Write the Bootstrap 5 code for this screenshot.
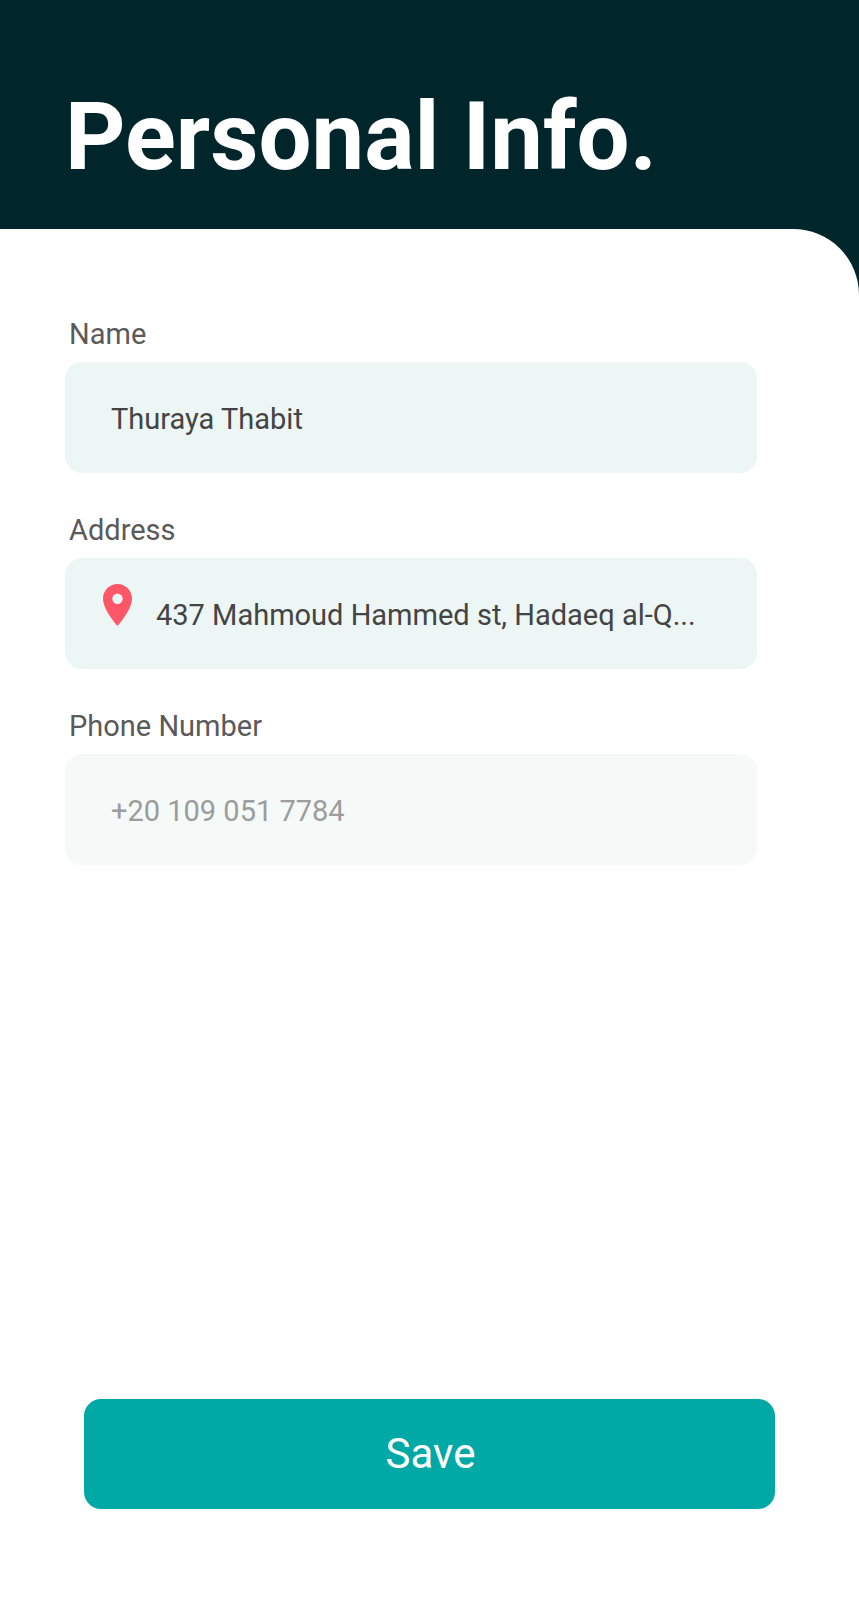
<!DOCTYPE html>
<html lang="en">
<head>
<meta charset="utf-8">
<meta name="viewport" content="width=device-width, initial-scale=1">
<title>Personal Info</title>
<link href="https://cdn.jsdelivr.net/npm/bootstrap@5.3.0/dist/css/bootstrap.min.css" rel="stylesheet">
<style>
  body { background: #00262b; font-family: Roboto, "Liberation Sans", sans-serif; }
  .page-header { padding: 82px 65px 37px; }
  .page-title { font-size: 94px; line-height: 110px; }
  .sheet { padding: 87px 84px 112px 65px; border-top-right-radius: 66px; }
  .fields { gap: 39px; padding-right: 18px; }
  .field-label { font-size: 29px; line-height: 36px; margin: 0 0 10px 4px; color: #5a5a5a; }
  .field-box { border-radius: 17px; background: #ecf6f5; padding: 0 46px; height: 111px; border: 0; }
  .field-box input { font-size: 29px; line-height: 36px; color: #444; padding: 3px 0 0; border-radius: 0; }
  .field-box input:focus { box-shadow: none; background: transparent; }
  .field-box.with-pin { padding: 0 46px 0 38px; }
  .pin { width: 29px; height: 42px; margin: 0 24px 17px 0; }
  .field-box.is-empty { background: #f5f9f8; }
  .field-box input::placeholder { color: #9c9c9c; opacity: 1; }
  .save-btn { --bs-btn-bg: #00a8a6; --bs-btn-border-color: #00a8a6; --bs-btn-color: #fff;
    --bs-btn-hover-bg: #009492; --bs-btn-hover-color: #fff; --bs-btn-active-bg: #008583; --bs-btn-active-color: #fff;
    --bs-btn-border-radius: 17px; --bs-btn-border-width: 0; margin-left: 19px;
    font-size: 42px; line-height: 50px; padding: 30px 28px 30px 30px; }
</style>
</head>
<body class="min-vh-100 d-flex flex-column">
<header class="page-header">
  <h1 class="page-title fw-bold text-white m-0">Personal Info.</h1>
</header>
<main class="flex-grow-1 d-flex">
  <form class="sheet bg-white flex-grow-1 d-flex flex-column">
    <div class="fields d-flex flex-column">
      <div>
        <label class="field-label d-block" for="name">Name</label>
        <div class="field-box d-flex align-items-center">
          <input class="form-control border-0 bg-transparent" id="name" type="text" value="Thuraya Thabit">
        </div>
      </div>
      <div>
        <label class="field-label d-block" for="address">Address</label>
        <div class="field-box with-pin d-flex align-items-center">
          <svg class="pin flex-shrink-0" viewBox="0 0 29 42" aria-hidden="true">
            <path fill="#ff5668" fill-rule="evenodd" d="M14.500 0C6.500 0 0 6.600 0 14.700C0 25.700 14.500 42 14.500 42S29 25.700 29 14.700C29 6.600 22.500 0 14.500 0ZM14.500 20A5.200 5.200 0 1 1 14.500 9.600A5.200 5.200 0 0 1 14.500 20Z"/>
          </svg>
          <input class="form-control border-0 bg-transparent" id="address" type="text" value="437 Mahmoud Hammed st, Hadaeq al-Q...">
        </div>
      </div>
      <div>
        <label class="field-label d-block" for="phone">Phone Number</label>
        <div class="field-box is-empty d-flex align-items-center">
          <input class="form-control border-0 bg-transparent" id="phone" type="tel" placeholder="+20 109 051 7784">
        </div>
      </div>
    </div>
    <button class="btn save-btn mt-auto" type="submit">Save</button>
  </form>
</main>
<script src="https://cdn.jsdelivr.net/npm/bootstrap@5.3.0/dist/js/bootstrap.bundle.min.js"></script>
</body>
</html>
